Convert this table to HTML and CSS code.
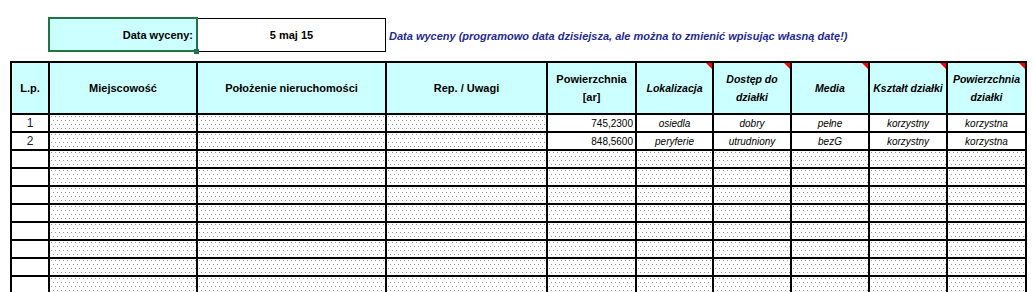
FILE: index.html
```html
<!DOCTYPE html>
<html lang="pl">
<head>
<meta charset="utf-8">
<title>Data wyceny</title>
<link rel="stylesheet" href="styles.css">
</head>
<body>
<div class="top">
  <div class="label-cell">Data wyceny:<span class="handle"></span></div>
  <div class="value-cell">5 maj 15</div>
  <div class="note">Data wyceny (programowo data dzisiejsza, ale można to zmienić wpisując własną datę!)</div>
</div>
<div class="sheet">
  <div class="hd">L.p.</div>
  <div class="hd">Miejscowość</div>
  <div class="hd">Położenie nieruchomości</div>
  <div class="hd">Rep. / Uwagi</div>
  <div class="hd">Powierzchnia<br>[ar]</div>
  <div class="hd it">Lokalizacja<span class="mark"></span></div>
  <div class="hd it">Dostęp do<br>działki<span class="mark"></span></div>
  <div class="hd it">Media<span class="mark"></span></div>
  <div class="hd it">Kształt działki<span class="mark"></span></div>
  <div class="hd it">Powierzchnia<br>działki<span class="mark"></span></div>

  <div class="c lp">1</div><div class="c dot"></div><div class="c dot"></div><div class="c dot"></div>
  <div class="c num">745,2300</div><div class="c val">osiedla</div><div class="c val">dobry</div><div class="c val">pełne</div><div class="c val">korzystny</div><div class="c val">korzystna</div>

  <div class="c lp">2</div><div class="c dot"></div><div class="c dot"></div><div class="c dot"></div>
  <div class="c num">848,5600</div><div class="c val">peryferie</div><div class="c val">utrudniony</div><div class="c val">bezG</div><div class="c val">korzystny</div><div class="c val">korzystna</div>

  <div class="c lp"></div><div class="c dot"></div><div class="c dot"></div><div class="c dot"></div><div class="c dot"></div><div class="c dot"></div><div class="c dot"></div><div class="c dot"></div><div class="c dot"></div><div class="c dot"></div>
  <div class="c lp"></div><div class="c dot"></div><div class="c dot"></div><div class="c dot"></div><div class="c dot"></div><div class="c dot"></div><div class="c dot"></div><div class="c dot"></div><div class="c dot"></div><div class="c dot"></div>
  <div class="c lp"></div><div class="c dot"></div><div class="c dot"></div><div class="c dot"></div><div class="c dot"></div><div class="c dot"></div><div class="c dot"></div><div class="c dot"></div><div class="c dot"></div><div class="c dot"></div>
  <div class="c lp"></div><div class="c dot"></div><div class="c dot"></div><div class="c dot"></div><div class="c dot"></div><div class="c dot"></div><div class="c dot"></div><div class="c dot"></div><div class="c dot"></div><div class="c dot"></div>
  <div class="c lp"></div><div class="c dot"></div><div class="c dot"></div><div class="c dot"></div><div class="c dot"></div><div class="c dot"></div><div class="c dot"></div><div class="c dot"></div><div class="c dot"></div><div class="c dot"></div>
  <div class="c lp"></div><div class="c dot"></div><div class="c dot"></div><div class="c dot"></div><div class="c dot"></div><div class="c dot"></div><div class="c dot"></div><div class="c dot"></div><div class="c dot"></div><div class="c dot"></div>
  <div class="c lp"></div><div class="c dot"></div><div class="c dot"></div><div class="c dot"></div><div class="c dot"></div><div class="c dot"></div><div class="c dot"></div><div class="c dot"></div><div class="c dot"></div><div class="c dot"></div>
  <div class="c lp"></div><div class="c dot"></div><div class="c dot"></div><div class="c dot"></div><div class="c dot"></div><div class="c dot"></div><div class="c dot"></div><div class="c dot"></div><div class="c dot"></div><div class="c dot"></div>
  <div class="c lp"></div><div class="c dot"></div><div class="c dot"></div><div class="c dot"></div><div class="c dot"></div><div class="c dot"></div><div class="c dot"></div><div class="c dot"></div><div class="c dot"></div><div class="c dot"></div>
</div>
</body>
</html>
```

FILE: styles.css
```css
html, body {
  margin: 0;
  padding: 0;
  background: #fff;
  overflow: hidden;
}
body {
  font-family: "Liberation Sans", Arial, sans-serif;
  color: #000;
  width: 1033px;
  height: 292px;
}
.top {
  display: flex;
  align-items: flex-start;
  margin: 17px 0 0 48px;
  height: 35px;
}
.label-cell {
  position: relative;
  box-sizing: border-box;
  width: 150px;
  height: 35px;
  border: 2px solid #217346;
  background: #ccffff;
  font-size: 11px;
  font-weight: bold;
  display: flex;
  align-items: center;
  justify-content: flex-end;
  padding-right: 3px;
  padding-top: 1px;
}
.handle {
  position: absolute;
  right: -3px;
  bottom: -4px;
  width: 5px;
  height: 5px;
  background: #217346;
}
.value-cell {
  box-sizing: border-box;
  width: 188px;
  height: 34px;
  margin-top: 1px;
  border: 1px solid #000;
  border-left: none;
  font-size: 11px;
  font-weight: bold;
  display: flex;
  align-items: center;
  justify-content: center;
}
.note {
  height: 35px;
  display: flex;
  align-items: center;
  padding-left: 3px;
  padding-top: 1px;
  font-size: 11px;
  font-weight: bold;
  font-style: italic;
  color: #1f2a8f;
  white-space: nowrap;
}
.sheet {
  display: grid;
  grid-template-columns: 36px 146px 187px 159px 87px 75px 76px 76px 76px 77px;
  grid-template-rows: 50px;
  grid-auto-rows: 16px;
  gap: 2px;
  padding: 2px;
  background: #000;
  width: max-content;
  margin: 9px 0 0 10px;
}
.hd {
  position: relative;
  background: #ccffff;
  display: flex;
  align-items: center;
  justify-content: center;
  text-align: center;
  font-size: 11px;
  font-weight: bold;
  line-height: 18px;
}
.hd.it {
  font-style: italic;
  font-size: 10.5px;
}
.mark {
  position: absolute;
  top: 0;
  right: 0;
  width: 6px;
  height: 6px;
  background: #ff0000;
  clip-path: polygon(0 0, 100% 0, 100% 100%);
}
.c {
  background: #fff;
  display: flex;
  align-items: center;
  justify-content: center;
  font-size: 10px;
  white-space: nowrap;
}
.lp {
  font-size: 12px;
  color: #1a1a40;
}
.num {
  justify-content: flex-end;
  padding-right: 2px;
}
.val {
  font-style: italic;
}
.dot {
  background-color: #fff;
  background-image:
    conic-gradient(at 1px 1px, transparent 75%, #9a9a9a 0),
    conic-gradient(at 1px 1px, transparent 75%, #9a9a9a 0);
  background-size: 4px 8px, 4px 8px;
  background-position: 1px 1px, 3px 5px;
}
```
